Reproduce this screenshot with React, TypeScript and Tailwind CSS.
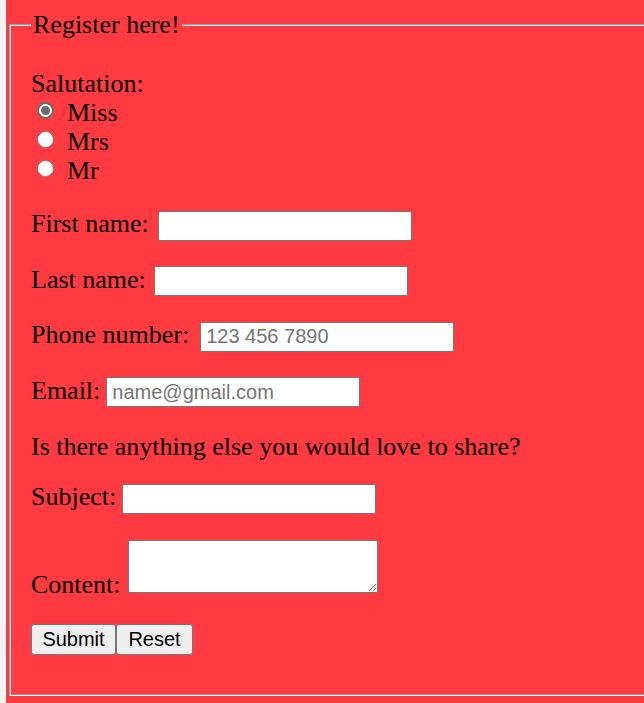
import React from "react";

const inputCls =
  "h-[30px] bg-white border border-[#767676] rounded-[2px] px-[5px] font-['Liberation_Sans',Arial,sans-serif] text-[20px] leading-[23px] text-black placeholder:text-[#757575] outline-none";

const btnCls =
  "h-[31px] bg-[#efefef] border border-[#767676] rounded-[3px] font-['Liberation_Sans',Arial,sans-serif] text-[20px] leading-[23px] text-black";

function Radio({ checked }: { checked?: boolean }) {
  return checked ? (
    <span className="ml-[6px] mt-[4px] w-[17px] h-[17px] rounded-full border-2 border-[#6b6b6b] bg-white flex items-center justify-center shrink-0">
      <span className="w-[9px] h-[9px] rounded-full bg-[#6b6b6b]" />
    </span>
  ) : (
    <span className="ml-[6px] mt-[4px] w-[17px] h-[17px] rounded-full border border-[#767676] bg-white shrink-0" />
  );
}

function Row({ label, gap, placeholder, mt }: { label: string; gap: string; placeholder?: string; mt: string }) {
  return (
    <div className={`flex items-baseline ${gap} ${mt}`}>
      <span>{label}</span>
      <input type="text" placeholder={placeholder} className={`${inputCls} w-[254px]`} />
    </div>
  );
}

export default function App() {
  return (
    <div className="w-full h-[703px] overflow-hidden bg-[#f5f5f5] pl-[6px] font-['Liberation_Serif','Times_New_Roman',serif] text-[26px] leading-[29px] text-black">
      <div className="h-full bg-[#ff3a40] pt-[10px] pl-[3px]">
        <form onSubmit={(e) => e.preventDefault()}>
          <fieldset className="w-[680px] [border:2px_groove_#f0f0f0] pl-[20px] pb-[39px]">
            <legend className="px-[2px]">Register here!</legend>

            <div className="mt-[30px]">Salutation:</div>
            {[
              { name: "Miss", checked: true },
              { name: "Mrs" },
              { name: "Mr" },
            ].map((r) => (
              <div key={r.name} className="flex items-start">
                <Radio checked={r.checked} />
                <span className="ml-[13px]">{r.name}</span>
              </div>
            ))}

            <Row label="First name:" gap="gap-[9px]" mt="mt-[24px]" />
            <Row label="Last name:" gap="gap-[8px]" mt="mt-[24px]" />
            <Row label="Phone number:" gap="gap-[11px]" placeholder="123 456 7890" mt="mt-[24px]" />
            <Row label="Email:" gap="gap-[6px]" placeholder="name@gmail.com" mt="mt-[24px]" />

            <div className="mt-[25px]">Is there anything else you would love to share?</div>

            <Row label="Subject:" gap="gap-[6px]" mt="mt-[21px]" />

            <div className="flex items-end gap-[7px] mt-[26px]">
              <span>Content:</span>
              <textarea className="mb-[6px] w-[250px] h-[53px] bg-white border border-[#767676] rounded-[2px] outline-none" />
            </div>

            <div className="flex mt-[25px]">
              <button type="submit" className={`${btnCls} w-[85px]`}>
                Submit
              </button>
              <button type="reset" className={`${btnCls} w-[77px]`}>
                Reset
              </button>
            </div>
          </fieldset>
        </form>
      </div>
    </div>
  );
}
